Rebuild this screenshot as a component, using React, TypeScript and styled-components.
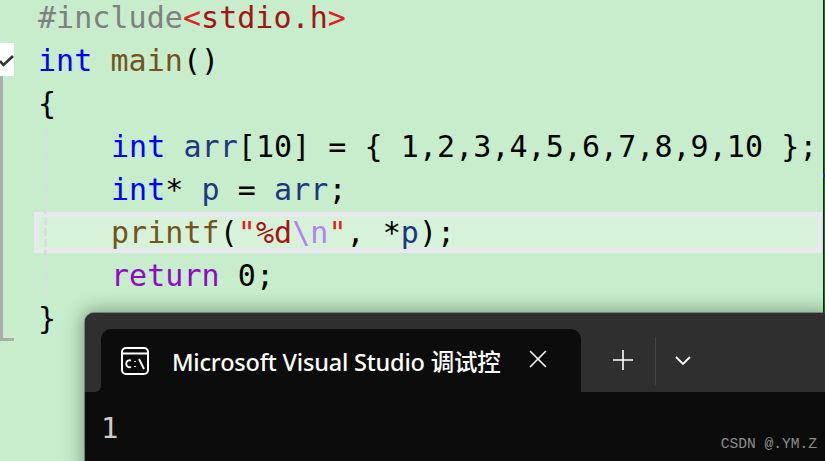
import React from "react";
import styled, { createGlobalStyle } from "styled-components";

const Global = createGlobalStyle`
  html, body { margin: 0; padding: 0; background: #c7edcc; }
  #root { width: 825px; height: 461px; }
`;

const Page = styled.div`
  position: relative;
  width: 825px;
  height: 461px;
  overflow: hidden;
  background: #c7edcc;
  display: flex;
  font-family: "DejaVu Sans Mono", "Liberation Mono", monospace;
`;

const Gutter = styled.div`
  width: 34px;
  flex: none;
  display: flex;
  flex-direction: column;
  padding-top: 43px;
  box-sizing: border-box;
`;

const FoldBox = styled.div`
  width: 14px;
  height: 33px;
  background: #fff;
  display: flex;
  align-items: center;
`;

const FoldLine = styled.div`
  width: 14px;
  height: 265px;
  box-sizing: border-box;
  border-left: 3px solid #a9aeaa;
  border-bottom: 3px solid #a9aeaa;
`;

const Code = styled.div`
  flex: 1;
  display: flex;
  flex-direction: column;
  margin-top: -4px;
  min-width: 0;
`;

const Line = styled.div<{ $indent?: number; $current?: boolean }>`
  height: 43px;
  line-height: 43px;
  font-size: 30px;
  letter-spacing: 0.05px;
  white-space: pre;
  box-sizing: border-box;
  padding-left: ${(p) => (p.$indent ? 77 : 4)}px;
  color: #000;
  ${(p) =>
    p.$current &&
    `
    width: 788px;
    height: 41px;
    margin: 1px 0;
    line-height: 31px;
    border: 5px solid #e8e8ee;
    background: #d6f2d9;
    padding-left: 72px;
  `}
`;

const Tok = styled.span<{ $c: string }>`
  color: ${(p) => p.$c};
`;

const Guide = styled.div`
  position: absolute;
  left: 44px;
  top: 129px;
  height: 168px;
  width: 3px;
  background: repeating-linear-gradient(to bottom, #d9dfdd 0 8px, transparent 8px 11px);
`;

const RightEdge = styled.div`
  position: absolute;
  right: 0;
  top: 0;
  width: 2px;
  height: 313px;
  background: linear-gradient(to right, #12261a 0 1px, #1f6b2a 1px 2px);
  &::after {
    content: "";
    position: absolute;
    left: 0;
    top: 174px;
    width: 2px;
    height: 3px;
    background: #1a1ae0;
  }
`;

const Terminal = styled.div`
  position: absolute;
  left: 85px;
  top: 313px;
  width: 745px;
  height: 160px;
  background: #0c0c0c;
  border-radius: 9px 0 0 0;
  box-shadow: 0 0 18px 3px rgba(30, 50, 35, 0.42), 0 0 0 1px rgba(90, 100, 92, 0.55);
  display: flex;
  flex-direction: column;
  overflow: hidden;
`;

const TabStrip = styled.div`
  height: 79px;
  flex: none;
  background: #2f2f2f;
  display: flex;
  align-items: flex-end;
  padding-left: 16px;
  box-sizing: border-box;
  position: relative;
`;

const Tab = styled.div`
  width: 480px;
  height: 63px;
  background: #0c0c0c;
  border-radius: 10px 10px 0 0;
  display: flex;
  align-items: center;
  box-sizing: border-box;
  padding: 0 0 0 20px;
  color: #fff;
  flex: none;
`;

const TabIcon = styled.svg`
  width: 28px;
  height: 28px;
  flex: none;
`;

const TabTitle = styled.span`
  margin-left: 23px;
  width: 329px;
  flex: none;
  font-family: "Noto Sans", "Noto Sans CJK SC", sans-serif;
  font-size: 23.5px;
  font-weight: 500;
  white-space: nowrap;
  overflow: hidden;
  letter-spacing: -0.2px;
`;

const CloseIcon = styled.svg`
  width: 18px;
  height: 18px;
  margin-left: 28px;
  margin-top: -4px;
  flex: none;
`;

const Actions = styled.div`
  height: 63px;
  display: flex;
  align-items: center;
  flex: none;
  box-sizing: border-box;
`;

const Plus = styled.svg`
  width: 22px;
  height: 22px;
  margin-left: 31px;
  margin-top: -1px;
  flex: none;
`;

const Divider = styled.div`
  width: 1px;
  height: 48px;
  background: #454545;
  margin-left: 21px;
  flex: none;
`;

const Chevron = styled.svg`
  width: 18px;
  height: 12px;
  margin-left: 18px;
  flex: none;
`;

const Notch = styled.div`
  position: absolute;
  left: 0;
  top: 63px;
  width: 16px;
  height: 16px;
  background: #0c0c0c;
  &::after {
    content: "";
    position: absolute;
    inset: 0;
    background: #2f2f2f;
    border-radius: 0 0 6px 0;
  }
`;

const StripEnd = styled.div`
  position: absolute;
  left: 496px;
  top: 63px;
  width: 8px;
  height: 16px;
  background: #2f2f2f;
  border-radius: 0 0 0 6px;
`;

const Output = styled.div`
  padding: 16px 0 0 16px;
  font-size: 29px;
  line-height: 40px;
  color: #cccccc;
`;

const Watermark = styled.span`
  position: absolute;
  right: 8px;
  bottom: 8px;
  font-family: "Liberation Mono", monospace;
  font-size: 14.6px;
  line-height: 18px;
  color: #8d8d8d;
`;

const KW = "#0000ff";
const FN = "#74531f";
const VAR = "#1f377f";
const PP = "#808080";
const STR = "#a31515";

export default function App() {
  return (
    <Page>
      <Global />
      <Gutter>
        <FoldBox>
          <svg width="14" height="16" viewBox="0 0 14 16">
            <path d="M0 9 L3.5 13 L13 4" fill="none" stroke="#333" strokeWidth="2.6" />
          </svg>
        </FoldBox>
        <FoldLine />
      </Gutter>
      <Code>
        <Line>
          <Tok $c={PP}>#include</Tok>
          <Tok $c="#e21f1f">&lt;</Tok>
          <Tok $c={STR}>stdio.h</Tok>
          <Tok $c="#e21f1f">&gt;</Tok>
        </Line>
        <Line>
          <Tok $c={KW}>int</Tok> <Tok $c={FN}>main</Tok>()
        </Line>
        <Line>{"{"}</Line>
        <Line $indent={1}>
          <Tok $c={KW}>int</Tok> <Tok $c={VAR}>arr</Tok>[10] = {"{"} 1,2,3,4,5,6,7,8,9,10 {"};"}
        </Line>
        <Line $indent={1}>
          <Tok $c={KW}>int</Tok>* <Tok $c={VAR}>p</Tok> = <Tok $c={VAR}>arr</Tok>;
        </Line>
        <Line $indent={1} $current>
          <Tok $c={FN}>printf</Tok>(<Tok $c="#e21f1f">"</Tok>
          <Tok $c={STR}>%d</Tok>
          <Tok $c="#b77fff">\n</Tok>
          <Tok $c="#e21f1f">"</Tok>, *<Tok $c={VAR}>p</Tok>);
        </Line>
        <Line $indent={1}>
          <Tok $c="#8f08c4">return</Tok> 0;
        </Line>
        <Line>{"}"}</Line>
      </Code>
      <Guide />
      <RightEdge />
      <Terminal>
        <TabStrip>
          <Tab>
            <TabIcon viewBox="0 0 28 28" fill="none" stroke="#fff" strokeWidth="2">
              <rect x="1" y="1" width="26" height="26" rx="4" />
              <path d="M1 6.5 H27" />
              <path d="M10 13.5 a3.5 3.5 0 1 0 0 6.5 M14 14 v1 M14 19 v1 M18 12 L23 22" strokeWidth="1.8" />
            </TabIcon>
            <TabTitle>Microsoft Visual Studio 调试控</TabTitle>
            <CloseIcon viewBox="0 0 18 18" fill="none" stroke="#fff" strokeWidth="1.6">
              <path d="M1 1 L17 17 M17 1 L1 17" />
            </CloseIcon>
          </Tab>
          <Actions>
            <Plus viewBox="0 0 22 22" fill="none" stroke="#fff" strokeWidth="1.6">
              <path d="M11 1 V21 M1 11 H21" />
            </Plus>
            <Divider />
            <Chevron viewBox="0 0 18 12" fill="none" stroke="#fff" strokeWidth="1.8">
              <path d="M2 2 L9 9 L16 2" />
            </Chevron>
          </Actions>
          <Notch />
          <StripEnd />
        </TabStrip>
        <Output>1</Output>
      </Terminal>
      <Watermark>CSDN @.YM.Z</Watermark>
    </Page>
  );
}
